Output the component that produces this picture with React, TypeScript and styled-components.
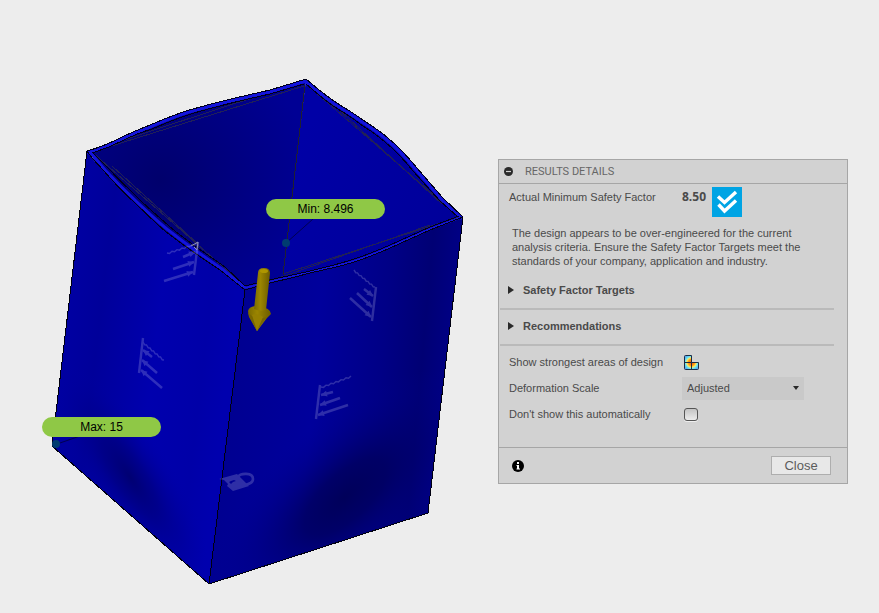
import React, { useState } from 'react';
import styled, { createGlobalStyle } from 'styled-components';

const GlobalStyle = createGlobalStyle`
  *, *::before, *::after { box-sizing: border-box; }
  body {
    margin: 0;
    background: #ededed;
    color: #4a4a4a;
    font: 11px/14px "Liberation Sans", Arial, sans-serif;
  }
`;

const Page = styled.div`
  display: flex;
  align-items: flex-start;
  min-height: 100vh;
`;

const Viewport = styled.main`
  position: relative;
  flex: 0 0 auto;
`;

const Scene = styled.svg`
  display: block;
`;

const ProbeLabel = styled.div<{ $x: number; $y: number }>`
  position: absolute;
  left: ${({ $x }) => $x}px;
  top: ${({ $y }) => $y}px;
  width: 119px;
  border-radius: 10px;
  background: #8fc846;
  color: #000;
  font-size: 12px;
  line-height: 20px;
  text-align: center;
`;

const Panel = styled.section`
  flex: 1 1 0;
  min-width: 0;
  margin: 159px 31px 0 0;
  border: 1px solid #a6a6a6;
  background: #d2d2d2;
`;

const PanelHeader = styled.header`
  display: flex;
  align-items: center;
  gap: 12px;
  height: 24px;
  padding-left: 5px;
  border-bottom: 1px solid #a6a6a6;
`;

const PanelTitle = styled.h2`
  margin: 0;
  color: #666;
  font: 400 11px/14px Roboto, "Liberation Sans", sans-serif;
`;

const BareButton = styled.button`
  display: flex;
  padding: 0;
  border: 0;
  background: none;
  color: inherit;
  font: inherit;
  cursor: pointer;
`;

const SummaryRow = styled.div`
  display: grid;
  grid-template-columns: 173px 30px 30px;
  align-items: start;
  padding: 3px 10px 0;
`;

const SummaryText = styled.span`
  padding-top: 3px;
`;

const SummaryValue = styled.strong`
  padding-top: 3px;
  font: 700 12px/14px "Open Sans", sans-serif;
`;

const Message = styled.p`
  max-width: 310px;
  margin: 9px 0 6px 13px;
`;

const SectionHeading = styled.h3`
  margin: 0 13px 0 1px;
  padding: 9px 0 11px 8px;
  border-bottom: 2px solid #bababa;
  font: 700 11px/14px "Liberation Sans", Arial, sans-serif;
`;

const SectionToggle = styled(BareButton)`
  align-items: center;
  gap: 9px;
  font-weight: 700;
`;

const Settings = styled.div`
  display: grid;
  grid-template-columns: 173px 122px;
  grid-auto-rows: 26px;
  align-items: center;
  padding: 3px 10px 20px;
`;

const SettingLabel = styled.label``;

const SelectBox = styled.div`
  display: grid;
  align-items: center;
  height: 23px;
  background: #c9c9c9;

  & > * {
    grid-area: 1 / 1;
  }
`;

const Select = styled.select`
  appearance: none;
  width: 100%;
  height: 100%;
  padding: 0 5px;
  border: 0;
  border-radius: 0;
  background: transparent;
  color: #4a4a4a;
  font: inherit;
`;

const Caret = styled.svg`
  justify-self: end;
  margin-right: 5px;
  pointer-events: none;
`;

const Checkbox = styled.input`
  appearance: none;
  width: 14px;
  height: 13px;
  margin: 0 0 0 2px;
  border: 1px solid #555;
  border-radius: 3px;
  background: linear-gradient(#c4c4c4, #ececec);
  box-shadow: 0 1px 0 #eee;

  &:checked {
    background: #666;
  }
`;

const IconButton = styled(BareButton)`
  justify-self: start;
  margin-left: 2px;
`;

const PanelFooter = styled.footer`
  display: flex;
  align-items: center;
  justify-content: space-between;
  height: 36px;
  padding: 0 16px 0 13px;
  border-top: 1px solid #a6a6a6;
`;

const CloseButton = styled.button`
  width: 60px;
  height: 19px;
  padding: 0;
  border: 1px solid #aeaeae;
  background: #e8e8e8;
  color: #5c5c5c;
  font: 13px/15px "Liberation Sans", Arial, sans-serif;
`;

type Point = [number, number];
type FixtureProps = { wall: [Point, Point]; ground: [Point, Point]; arrows: [Point, Point][] };

const fixtures: FixtureProps[] = [
  {
    wall: [[198, 242], [194, 275]],
    ground: [[197, 243], [167, 253]],
    arrows: [[[183, 257], [195, 252]], [[173, 269], [194, 262]], [[164, 281], [193, 272]]],
  },
  {
    wall: [[143, 338], [139, 373]],
    ground: [[143, 342], [164, 360]],
    arrows: [[[152, 357], [143, 350]], [[157, 373], [142, 360]], [[162, 388], [141, 370]]],
  },
  {
    wall: [[376, 287], [372, 321]],
    ground: [[375, 287], [354, 270]],
    arrows: [[[364, 289], [373, 296]], [[357, 293], [372, 307]], [[350, 298], [371, 317]]],
  },
  {
    wall: [[320, 385], [316, 419]],
    ground: [[321, 387], [351, 376]],
    arrows: [[[333, 392], [321, 395]], [[340, 398], [320, 405]], [[348, 405], [318, 415]]],
  },
];

function zigzag([a, b]: [Point, Point]) {
  const steps = 12;
  return Array.from({ length: steps + 1 }, (_, i) => {
    const t = i / steps;
    return `${a[0] + (b[0] - a[0]) * t},${a[1] + (b[1] - a[1]) * t + (i % 2 ? 1.3 : 0)}`;
  }).join(' ');
}

function arrowHead([a, b]: [Point, Point]) {
  const length = Math.hypot(b[0] - a[0], b[1] - a[1]);
  const ux = (b[0] - a[0]) / length;
  const uy = (b[1] - a[1]) / length;
  const bx = b[0] - ux * 6;
  const by = b[1] - uy * 6;
  return `${b[0]},${b[1]} ${bx - uy * 3},${by + ux * 3} ${bx + uy * 3},${by - ux * 3}`;
}

function Fixture({ wall, ground, arrows }: FixtureProps) {
  return (
    <g opacity="0.18" stroke="#fff" fill="none">
      <path d={`M${wall[0]}L${wall[1]}`} strokeWidth="2.4" />
      <polyline points={zigzag(ground)} strokeWidth="1.4" />
      {arrows.map((arrow) => (
        <g key={String(arrow)}>
          <path d={`M${arrow[0]}L${arrow[1]}`} strokeWidth="2.5" />
          <polygon points={arrowHead(arrow)} fill="#fff" stroke="none" />
        </g>
      ))}
    </g>
  );
}

const BACK_EDGE = 'C98 148 108 144 120 138C130 133 140 129 150 125C164 119 178 113 193 109C217 102 243 96 270 90L306 79';
const RIGHT_EDGE = 'C319 90 327 97 340 105C348 110 355 114 363 120C372 126 380 131 388 138C399 147 408 157 417 168L443 198L463 217';
const FRONT_LEFT_EDGE = 'M87 151C92 159 97 163 103 170C115 184 124 193 137 205C149 216 158 226 170 235C186 247 203 259 220 270L245 290';
const FRONT_RIGHT_EDGE = 'M245 290C267 283 289 279 310 273C327 269 343 266 357 261C369 257 379 253 390 248L430 230L463 217';
const LEFT_FACE = `${FRONT_LEFT_EDGE}L209 584L52 446Z`;
const RIGHT_FACE = `${FRONT_RIGHT_EDGE}L428 513L209 584Z`;

function Model() {
  return (
    <Scene width="498" height="613" viewBox="0 0 498 613" role="img" aria-label="Safety factor plot of the box">
      <defs>
        <radialGradient id="leftDark" gradientUnits="userSpaceOnUse" cx="0" cy="0" r="1" gradientTransform="translate(130 477) rotate(57) scale(130 42)">
          <stop offset="0" stopColor="#00006c" stopOpacity="0.9" />
          <stop offset="0.35" stopColor="#000078" stopOpacity="0.6" />
          <stop offset="0.7" stopColor="#000090" stopOpacity="0.25" />
          <stop offset="1" stopColor="#0000a8" stopOpacity="0" />
        </radialGradient>
        <linearGradient id="leftFace" gradientUnits="userSpaceOnUse" x1="65" y1="330" x2="230" y2="350">
          <stop offset="0" stopColor="#0000a2" />
          <stop offset="0.2" stopColor="#00009a" />
          <stop offset="0.55" stopColor="#0000ae" />
          <stop offset="0.85" stopColor="#0000a8" />
          <stop offset="1" stopColor="#0000ae" />
        </linearGradient>
        <linearGradient id="rightFace" gradientUnits="userSpaceOnUse" x1="225" y1="380" x2="445" y2="400">
          <stop offset="0" stopColor="#000090" />
          <stop offset="0.4" stopColor="#00009c" />
          <stop offset="0.7" stopColor="#000086" />
          <stop offset="0.88" stopColor="#000074" />
          <stop offset="1" stopColor="#000084" />
        </linearGradient>
        <radialGradient id="rightDark" gradientUnits="userSpaceOnUse" cx="0" cy="0" r="1" gradientTransform="translate(345 497) rotate(-42) scale(170 75)">
          <stop offset="0" stopColor="#00005a" />
          <stop offset="0.3" stopColor="#00005e" stopOpacity="0.8" />
          <stop offset="0.65" stopColor="#000074" stopOpacity="0.35" />
          <stop offset="1" stopColor="#000090" stopOpacity="0" />
        </radialGradient>
        <radialGradient id="innerDark" gradientUnits="userSpaceOnUse" cx="160" cy="180" r="150">
          <stop offset="0" stopColor="#00006c" />
          <stop offset="0.4" stopColor="#00007c" />
          <stop offset="1" stopColor="#000094" />
        </radialGradient>
        <linearGradient id="innerRight" gradientUnits="userSpaceOnUse" x1="295" y1="150" x2="440" y2="230">
          <stop offset="0" stopColor="#0000a6" />
          <stop offset="1" stopColor="#00009a" />
        </linearGradient>
        <linearGradient id="gold" x1="0" x2="1">
          <stop offset="0" stopColor="#7a6a00" />
          <stop offset="0.4" stopColor="#9c8600" />
          <stop offset="1" stopColor="#6c5c00" />
        </linearGradient>
      </defs>

      {/* inner walls, continued under the front faces */}
      <path d={`M87 151${BACK_EDGE}L283 300L245 300L170 250Z`} fill="url(#innerDark)" />
      <path d={`M306 79${RIGHT_EDGE}L357 275L280 295Z`} fill="url(#innerRight)" />

      {/* outer walls */}
      <path d={LEFT_FACE} fill="url(#leftFace)" />
      <path d={LEFT_FACE} fill="url(#leftDark)" />
      <path d={RIGHT_FACE} fill="url(#rightFace)" />
      <path d={RIGHT_FACE} fill="url(#rightDark)" />

      {/* straight edges of the undeformed body */}
      <g fill="none" stroke="#202058" strokeWidth="1" shapeRendering="crispEdges">
        <path d="M92 152L304 86M96 149L270 92" />
        <path d="M93 153L246 287M112 166L198 244" />
        <path d="M306 84L459 217M326 98L442 204" />
        <path d="M283 274L459 217M270 281L430 225" />
      </g>

      {/* bright rim with its two dark outlines */}
      <g fill="none" strokeLinejoin="round">
        <g stroke="#1414dc" strokeWidth="3">
          <path d={`M87 151${BACK_EDGE}`} transform="translate(0 2)" />
          <path d={`M306 79${RIGHT_EDGE}`} transform="translate(-1 2)" />
          <path d="M90 152C95 158 99 163 105 170C117 183 126 192 139 204C151 215 160 224 172 233C188 246 205 257 222 269L245 288" />
          <path d="M245 288C267 282 289 277 310 272C327 268 343 265 357 260C369 256 379 252 390 247L430 229L462 217" strokeWidth="2" />
        </g>
        <g stroke="#000018" strokeWidth="1" shapeRendering="crispEdges">
          <path d={`M87 151${BACK_EDGE}`} />
          <path d={`M306 79${RIGHT_EDGE}`} />
          <path d="M92 153C102 150 110 147 122 141C132 136 141 132 152 129C166 123 180 117 194 113C218 106 243 100 270 94L304 84" />
          <path d="M306 84C318 94 326 102 338 109C346 114 353 118 360 124C370 130 377 135 385 142C396 151 405 161 413 171L440 201L458 217" />
          <path d={FRONT_LEFT_EDGE} />
          <path d="M92 152C98 158 102 162 108 168C120 181 129 189 142 202C153 212 163 221 175 231C191 244 208 255 225 267L245 286" />
          <path d={FRONT_RIGHT_EDGE} />
          <path d="M245 286C267 280 289 276 310 271C327 267 343 263 357 258C369 254 379 250 390 245L430 227L459 216" />
        </g>
      </g>
      <path d="M305 85L283 275" stroke="#202030" strokeWidth="1" fill="none" shapeRendering="crispEdges" />
      <path
        d="M87 151L52 446L209 584L428 513L463 217M245 290L209 584"
        fill="none"
        stroke="#000010"
        strokeWidth="1"
        shapeRendering="crispEdges"
      />

      {fixtures.map((fixture) => (
        <Fixture key={String(fixture.wall)} {...fixture} />
      ))}
      <path d="M191 246L198 242L197 250L194 247" fill="none" stroke="#9090c0" strokeWidth="1" />

      {/* fixed-constraint lock */}
      <g opacity="0.18">
        <path fill="#fff" fillRule="evenodd" d="M219 479L237 474L249 486L233 491L227 486L228 484L224 480ZM229 482L231 484L233 482L236 481L234 480L231 481Z" />
        <path d="M238 477C240 473 253 472 253 479C253 483 249 484 245 485" fill="none" stroke="#fff" strokeWidth="2.6" />
      </g>

      {/* load arrow */}
      <path d="M248 311Q249 306 258 306Q271 308 271 314L267 318L257 331L249 316Z" fill="url(#gold)" />
      <path d="M258 273Q258 268 264 268Q270 268 270 273L266 310Q260 312 254 309Z" fill="url(#gold)" />
      <ellipse cx="264" cy="271" rx="4" ry="2" fill="#ae9600" />
      <path d="M248 312Q253 319 261 318Q268 318 271 313L266 318L257 331L249 317Z" fill="#786600" />
      <path d="M252 315Q257 312 263 317L257 331Z" fill="#968000" />

      {/* probe leaders */}
      <path d="M286 243L313 219M57 444L83 435" stroke="#000050" fill="none" />
      <circle cx="286" cy="243" r="4" fill="#003c70" />
      <circle cx="56" cy="444" r="4" fill="#003c70" />
    </Scene>
  );
}

const CollapseIcon = () => (
  <svg width="9" height="9" viewBox="0 0 9 9" aria-hidden="true">
    <circle cx="4.5" cy="4.5" r="4.5" fill="#2a2a2a" />
    <path d="M2 4.5h5" stroke="#d2d2d2" strokeWidth="1.2" />
  </svg>
);

const DoubleCheckIcon = () => (
  <svg width="30" height="30" viewBox="0 0 30 30" role="img" aria-label="Above target">
    <path fill="#00a4e4" d="M0 0h30v30H0z" />
    <path d="M6 9.5L12.500 15.500L24 5M6.500 17.500L12.500 24L24 13.500" fill="none" stroke="#fff" strokeWidth="3.4" />
  </svg>
);

const ExpandIcon = () => (
  <svg width="6" height="8" viewBox="0 0 6 8" aria-hidden="true">
    <path d="M0 0L6 4L0 8Z" fill="#2a2a2a" />
  </svg>
);

const StrengthIcon = () => (
  <svg width="15" height="15" viewBox="0 0 15 15" aria-hidden="true">
    <defs>
      <radialGradient id="heat" gradientUnits="userSpaceOnUse" cx="7.5" cy="7.5" r="9">
        <stop offset="0" stopColor="#f04a10" />
        <stop offset="0.35" stopColor="#ff9a10" />
        <stop offset="0.52" stopColor="#ffe860" />
        <stop offset="0.66" stopColor="#70e8f0" />
        <stop offset="1" stopColor="#4a90f0" />
      </radialGradient>
    </defs>
    <path d="M.5 1.5Q.5.5 1.5.5H7.5V7.5H14.5V13.5Q14.5 14.5 13.5 14.5H1.5Q.5 14.5.5 13.5Z" fill="url(#heat)" stroke="#1c2c44" />
    <path d="M.5 7.5H7.5V14.5" fill="none" stroke="#1c2c44" />
  </svg>
);

const InfoIcon = () => (
  <svg width="12" height="12" viewBox="0 0 12 12" aria-hidden="true">
    <circle cx="6" cy="6" r="6" fill="#000" />
    <path d="M5 2h2v2H5zM4.5 5H7v3.5h1V9.5H4.5V8.5H5V6H4.5Z" fill="#fff" />
  </svg>
);

export default function App() {
  const [hidden, setHidden] = useState(false);
  return (
    <>
      <GlobalStyle />
      <Page>
        <Viewport>
          <Model />
          <ProbeLabel $x={266} $y={199}>Min: 8.496</ProbeLabel>
          <ProbeLabel $x={42} $y={417}>Max: 15</ProbeLabel>
        </Viewport>
        <Panel aria-labelledby="results-title">
          <PanelHeader>
            <BareButton type="button" aria-label="Collapse">
              <CollapseIcon />
            </BareButton>
            <PanelTitle id="results-title">RESULTS DETAILS</PanelTitle>
          </PanelHeader>
          <SummaryRow>
            <SummaryText>Actual Minimum Safety Factor</SummaryText>
            <SummaryValue>8.50</SummaryValue>
            <DoubleCheckIcon />
          </SummaryRow>
          <Message>
            The design appears to be over-engineered for the current analysis criteria. Ensure the
            Safety Factor Targets meet the standards of your company, application and industry.
          </Message>
          {['Safety Factor Targets', 'Recommendations'].map((title) => (
            <SectionHeading key={title}>
              <SectionToggle type="button" aria-expanded={false}>
                <ExpandIcon />
                {title}
              </SectionToggle>
            </SectionHeading>
          ))}
          <Settings>
            <SettingLabel htmlFor="strongest">Show strongest areas of design</SettingLabel>
            <IconButton type="button" id="strongest">
              <StrengthIcon />
            </IconButton>
            <SettingLabel htmlFor="deformation">Deformation Scale</SettingLabel>
            <SelectBox>
              <Select id="deformation" defaultValue="Adjusted">
                <option>Adjusted</option>
              </Select>
              <Caret width="6" height="4" viewBox="0 0 6 4" aria-hidden="true">
                <path d="M0 0H6L3 4Z" fill="#2a2a2a" />
              </Caret>
            </SelectBox>
            <SettingLabel htmlFor="auto">Don't show this automatically</SettingLabel>
            <Checkbox id="auto" type="checkbox" checked={hidden} onChange={(e) => setHidden(e.target.checked)} />
          </Settings>
          <PanelFooter>
            <BareButton type="button" aria-label="Information">
              <InfoIcon />
            </BareButton>
            <CloseButton type="button">Close</CloseButton>
          </PanelFooter>
        </Panel>
      </Page>
    </>
  );
}
